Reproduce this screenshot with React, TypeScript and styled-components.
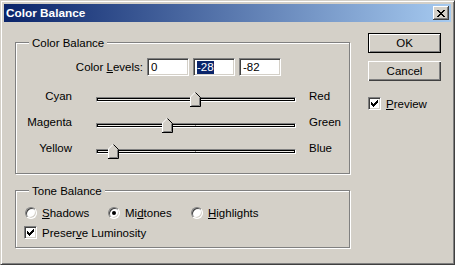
import styled, { createGlobalStyle } from 'styled-components';

const FACE = '#d4d0c8';

const GlobalStyle = createGlobalStyle`
  html, body {
    margin: 0;
    background: ${FACE};
  }
  body {
    font-family: "Liberation Sans", Arial, sans-serif;
    font-size: 11.5px;
    color: #000;
  }
`;

const Window = styled.div`
  box-sizing: border-box;
  width: 455px;
  height: 265px;
  padding: 3px;
  background: ${FACE};
  border: 1px solid;
  border-color: ${FACE} #404040 #404040 ${FACE};
  box-shadow: inset 1px 1px #fff, inset -1px -1px #808080;
`;

const TitleBar = styled.div`
  height: 18px;
  display: flex;
  align-items: center;
  justify-content: space-between;
  padding: 0 2px;
  background: linear-gradient(to right, #0a246a, #a6caf0);
  color: #fff;
  font-weight: bold;
  font-size: 11.8px;
`;

const CloseButton = styled.div`
  box-sizing: border-box;
  width: 16px;
  height: 14px;
  display: flex;
  align-items: center;
  justify-content: center;
  background: ${FACE};
  box-shadow: inset -1px -1px #404040, inset 1px 1px #fff, inset -2px -2px #808080;
`;

const Body = styled.div`
  display: flex;
  padding-left: 11px;
`;

const LeftColumn = styled.div`
  display: flex;
  flex-direction: column;
  width: 335px;
  padding-top: 20px;
  gap: 16px;
`;

const Group = styled.div<{ $height: number }>`
  box-sizing: border-box;
  height: ${p => p.$height}px;
  border: 1px solid #808080;
  box-shadow: inset 1px 1px #fff, 1px 1px #fff;
  display: flex;
  flex-direction: column;
  align-items: flex-start;
`;

const Legend = styled.div`
  margin: -7px 0 0 13px;
  padding: 0 3px;
  line-height: 14px;
  background: ${FACE};
`;

const LevelsRow = styled.div`
  margin-top: 8px;
  height: 18px;
  display: flex;
  align-items: center;
  gap: 4px;
`;

const LevelsLabel = styled.div`
  width: 127px;
  text-align: right;
`;

const Field = styled.div`
  box-sizing: border-box;
  width: 42px;
  height: 18px;
  padding-left: 3px;
  display: flex;
  align-items: center;
  background: #fff;
  border: 1px solid;
  border-color: #808080 #fff #fff #808080;
  box-shadow: inset 1px 1px #404040, inset -1px -1px ${FACE};
`;

const Selected = styled.span`
  line-height: 13px;
  background: #0a246a;
  color: #fff;
`;

const Sliders = styled.div`
  margin-top: 10px;
  display: flex;
  flex-direction: column;
`;

const SliderRow = styled.div`
  height: 26px;
  display: flex;
  align-items: flex-start;
`;

const SideLabel = styled.div`
  width: 56px;
  margin-top: 3px;
  line-height: 14px;
  text-align: right;
`;

const EndLabel = styled.div`
  margin: 3px 0 0 13px;
  line-height: 14px;
`;

const Track = styled.div`
  position: relative;
  box-sizing: border-box;
  width: 200px;
  height: 5px;
  margin: 11px 0 0 24px;
  background: #eeece8;
  border: 1px solid;
  border-color: #808080 #fff #fff #808080;
  box-shadow: inset 0 0 0 1px #000;

  &::after {
    content: '';
    position: absolute;
    left: 98px;
    top: 1px;
    width: 1px;
    height: 1px;
    background: #909090;
  }
`;

const Thumb = styled.svg`
  position: absolute;
  top: -6px;
  z-index: 1;
`;

const RadioRow = styled.div`
  margin-top: 8px;
  height: 14px;
  padding-left: 9px;
  display: flex;
  align-items: center;
`;

const RadioItem = styled.div`
  width: 83px;
  display: flex;
  align-items: center;
  gap: 5px;
`;

const RadioCircle = styled.div<{ $on?: boolean }>`
  position: relative;
  box-sizing: border-box;
  width: 12px;
  height: 12px;
  border-radius: 50%;
  background: #fff;
  border: 1px solid;
  border-color: #808080 #fff #fff #808080;
  box-shadow: inset 1px 1px #404040, inset -1px -1px ${FACE};

  &::after {
    content: '';
    display: ${p => (p.$on ? 'block' : 'none')};
    position: absolute;
    left: 3px;
    top: 3px;
    width: 4px;
    height: 4px;
    border-radius: 50%;
    background: #000;
  }
`;

const CheckRow = styled.div<{ $indent: number; $top: number }>`
  margin-top: ${p => p.$top}px;
  padding-left: ${p => p.$indent}px;
  display: flex;
  align-items: center;
  gap: 5px;
`;

const CheckBox = styled.div`
  box-sizing: border-box;
  width: 13px;
  height: 13px;
  display: flex;
  align-items: center;
  justify-content: center;
  background: #fff;
  border: 1px solid;
  border-color: #808080 #fff #fff #808080;
  box-shadow: inset 1px 1px #404040, inset -1px -1px ${FACE};
`;

const RightColumn = styled.div`
  display: flex;
  flex-direction: column;
  align-items: flex-start;
  margin-left: 18px;
  padding-top: 11px;
`;

const Button = styled.div<{ $default?: boolean }>`
  box-sizing: border-box;
  width: 73px;
  height: 20px;
  margin-bottom: 8px;
  display: flex;
  align-items: center;
  justify-content: center;
  background: ${FACE};
  border: ${p => (p.$default ? '1px solid #000' : 'none')};
  box-shadow: ${p =>
    p.$default
      ? 'inset 1px 1px #fff, inset -1px -1px #808080'
      : 'inset 1px 1px #fff, inset -1px -1px #404040, inset -2px -2px #808080'};
`;

const CLOSE_X = [
  'XX....XX',
  '.XX..XX.',
  '..XXXX..',
  '...XX...',
  '..XXXX..',
  '.XX..XX.',
  'XX....XX',
];

const CHECK = [
  '......X',
  '.....XX',
  'X...XXX',
  'XX.XXX.',
  'XXXXX..',
  '.XXX...',
  '..X....',
];

function Pixels({ rows }: { rows: string[] }) {
  return (
    <svg width={rows[0].length} height={rows.length} shapeRendering="crispEdges">
      {rows.map((row, y) =>
        row.split('').map((c, x) =>
          c === 'X' ? <rect key={`${x}-${y}`} x={x} y={y} width={1} height={1} fill="#000" /> : null
        )
      )}
    </svg>
  );
}

function Slider({ left, right, value }: { left: string; right: string; value: number }) {
  return (
    <SliderRow>
      <SideLabel>{left}</SideLabel>
      <Track>
        <Thumb width="11" height="15" style={{ left: 93 + value }}>
          <polygon points="0.5,5 5.5,0 10.5,5 10.5,14.5 0.5,14.5" fill={FACE} />
          <polyline points="0.5,14 0.5,5 5.5,0" fill="none" stroke="#fff" />
          <polyline points="9.5,5.5 9.5,13.5 1.5,13.5" fill="none" stroke="#808080" />
          <polyline points="5.5,0.5 10.5,5.5 10.5,14.5 0,14.5" fill="none" stroke="#000" />
        </Thumb>
      </Track>
      <EndLabel>{right}</EndLabel>
    </SliderRow>
  );
}

export default function App() {
  return (
    <>
      <GlobalStyle />
      <Window>
        <TitleBar>
          <span>Color Balance</span>
          <CloseButton>
            <Pixels rows={CLOSE_X} />
          </CloseButton>
        </TitleBar>
        <Body>
          <LeftColumn>
            <Group $height={132}>
              <Legend>Color Balance</Legend>
              <LevelsRow>
                <LevelsLabel>
                  Color <u>L</u>evels:
                </LevelsLabel>
                <Field>0</Field>
                <Field>
                  <Selected>-28</Selected>
                </Field>
                <Field>-82</Field>
              </LevelsRow>
              <Sliders>
                <Slider left="Cyan" right="Red" value={0} />
                <Slider left="Magenta" right="Green" value={-28} />
                <Slider left="Yellow" right="Blue" value={-82} />
              </Sliders>
            </Group>
            <Group $height={58}>
              <Legend>Tone Balance</Legend>
              <RadioRow>
                <RadioItem>
                  <RadioCircle />
                  <span>
                    <u>S</u>hadows
                  </span>
                </RadioItem>
                <RadioItem>
                  <RadioCircle $on />
                  <span>
                    Mi<u>d</u>tones
                  </span>
                </RadioItem>
                <RadioItem>
                  <RadioCircle />
                  <span>
                    <u>H</u>ighlights
                  </span>
                </RadioItem>
              </RadioRow>
              <CheckRow $indent={8} $top={6}>
                <CheckBox>
                  <Pixels rows={CHECK} />
                </CheckBox>
                <span>
                  Preser<u>v</u>e Luminosity
                </span>
              </CheckRow>
            </Group>
          </LeftColumn>
          <RightColumn>
            <Button $default>OK</Button>
            <Button>Cancel</Button>
            <CheckRow $indent={0} $top={8}>
              <CheckBox>
                <Pixels rows={CHECK} />
              </CheckBox>
              <span>
                <u>P</u>review
              </span>
            </CheckRow>
          </RightColumn>
        </Body>
      </Window>
    </>
  );
}
